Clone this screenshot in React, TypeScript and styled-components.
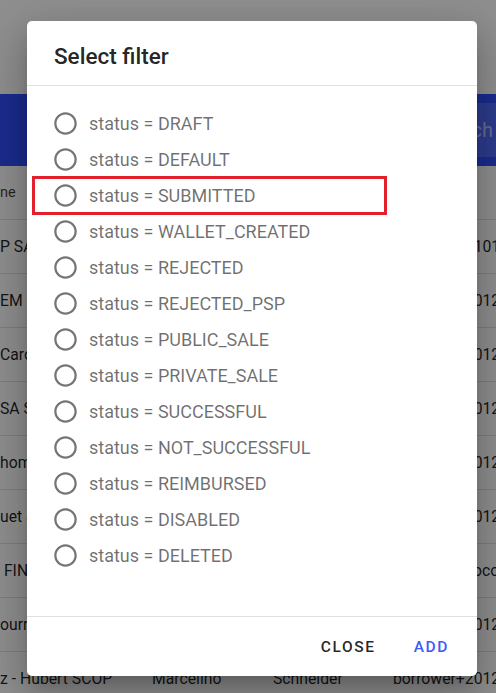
import { createGlobalStyle } from "styled-components";
import styled from "styled-components";

const GlobalStyle = createGlobalStyle`
  html, body {
    margin: 0;
    padding: 0;
    background: #ffffff;
  }
  body {
    font-family: Roboto, "Liberation Sans", Arial, sans-serif;
  }
`;

const Page = styled.div`
  position: relative;
  width: 496px;
  height: 693px;
  overflow: hidden;
  background: #ffffff;
`;

const TopSpace = styled.div`
  height: 94px;
`;

const Toolbar = styled.div`
  height: 72px;
  background: #304ffe;
  display: flex;
  align-items: center;
  justify-content: flex-end;
`;

const SearchBox = styled.div`
  width: 200px;
  height: 54px;
  box-sizing: border-box;
  padding-right: 3px;
  background: rgba(255, 255, 255, 0.16);
  border-radius: 4px 0 0 4px;
  display: flex;
  align-items: center;
  justify-content: flex-end;
  color: rgba(255, 255, 255, 0.6);
  font-size: 20px;
`;

const Table = styled.div`
  display: flex;
  flex-direction: column;
`;

const Row = styled.div<{ $header?: boolean }>`
  height: 54px;
  box-sizing: border-box;
  display: grid;
  grid-template-columns: 152px 121px 120px 1fr;
  align-items: center;
  border-bottom: 1px solid #e0e0e0;
  font-size: ${({ $header }) => ($header ? "14.5px" : "15.75px")};
  color: ${({ $header }) =>
    $header ? "rgba(0, 0, 0, 0.75)" : "rgba(0, 0, 0, 0.87)"};
  white-space: nowrap;
`;

const Cell = styled.div`
  overflow: hidden;
`;

const Backdrop = styled.div`
  position: absolute;
  inset: 0;
  background: rgba(0, 0, 0, 0.44);
  box-sizing: border-box;
  padding: 21px 19px 17px 27px;
  display: flex;
`;

const Dialog = styled.div`
  width: 450px;
  height: 655px;
  background: #ffffff;
  border-radius: 5px;
  display: flex;
  flex-direction: column;
  box-shadow: 0 11px 15px -7px rgba(0, 0, 0, 0.2),
    0 24px 38px 3px rgba(0, 0, 0, 0.14), 0 9px 46px 8px rgba(0, 0, 0, 0.12);
`;

const Title = styled.h2`
  margin: 0;
  height: 65px;
  box-sizing: border-box;
  padding: 17px 27px 0;
  font-size: 22.5px;
  line-height: 36px;
  font-weight: 500;
  color: rgba(0, 0, 0, 0.87);
  border-bottom: 1px solid #e0e0e0;
`;

const Content = styled.div`
  flex: 1;
  padding: 19px 27px 0;
  border-bottom: 1px solid #e0e0e0;
  display: flex;
  flex-direction: column;
`;

const Option = styled.label`
  position: relative;
  height: 36px;
  display: flex;
  align-items: center;
  gap: 10px;
  font-size: 18px;
  color: rgba(0, 0, 0, 0.57);
  cursor: pointer;
`;

const RadioIcon = styled.svg`
  width: 27px;
  height: 27px;
  margin-left: -2px;
  flex-shrink: 0;
  color: rgba(0, 0, 0, 0.54);
`;

const Highlight = styled.span`
  position: absolute;
  left: -22px;
  top: -1px;
  width: 355px;
  height: 39px;
  box-sizing: border-box;
  border: 3px solid #e3202b;
  pointer-events: none;
`;

const Actions = styled.div`
  height: 59px;
  display: flex;
  align-items: center;
  justify-content: flex-end;
  gap: 18px;
  padding-right: 18px;
`;

const TextButton = styled.button<{ $primary?: boolean }>`
  border: none;
  background: none;
  padding: 8px 10px;
  font-family: inherit;
  font-size: 15.5px;
  font-weight: 500;
  letter-spacing: 1.6px;
  text-transform: uppercase;
  color: ${({ $primary }) => ($primary ? "#3d5afe" : "rgba(0, 0, 0, 0.87)")};
  cursor: pointer;
`;

const statuses = [
  "DRAFT",
  "DEFAULT",
  "SUBMITTED",
  "WALLET_CREATED",
  "REJECTED",
  "REJECTED_PSP",
  "PUBLIC_SALE",
  "PRIVATE_SALE",
  "SUCCESSFUL",
  "NOT_SUCCESSFUL",
  "REIMBURSED",
  "DISABLED",
  "DELETED",
];

const rows = [
  ["P SAS", "Julien", "Martin", "borrower+0101@mail.fr"],
  ["EM SAS", "Claire", "Durand", "borrower+2012@mail.fr"],
  ["Caron", "Louis", "Caron", "borrower+2012@mail.fr"],
  ["SA SCOP", "Emma", "Petit", "borrower+2012@mail.fr"],
  ["homas", "Hugo", "Thomas", "borrower+2012@mail.fr"],
  ["uet and co", "Léa", "Jouet", "borrower+2012@mail.fr"],
  ["\u00a0FINANCE", "Paul", "Leroy", "borrower+coco@mail.fr"],
  ["ourrier", "Anna", "Fourrier", "borrower+2012@mail.fr"],
  ["z - Hubert SCOP", "Marcelino", "Schneider", "borrower+2012@mail.fr"],
];

const Radio = () => (
  <RadioIcon viewBox="0 0 24 24" aria-hidden="true">
    <path
      fill="currentColor"
      d="M12 2C6.48 2 2 6.48 2 12s4.48 10 10 10 10-4.48 10-10S17.52 2 12 2zm0 18c-4.42 0-8-3.58-8-8s3.58-8 8-8 8 3.58 8 8-3.58 8-8 8z"
    />
  </RadioIcon>
);

export default function App() {
  return (
    <Page>
      <GlobalStyle />
      <TopSpace />
      <Toolbar>
        <SearchBox>Search</SearchBox>
      </Toolbar>
      <Table>
        <Row $header>
          <Cell>ne</Cell>
          <Cell>First name</Cell>
          <Cell>Last name</Cell>
          <Cell>Email</Cell>
        </Row>
        {rows.map((cells, i) => (
          <Row key={i}>
            {cells.map((c, j) => (
              <Cell key={j}>{c}</Cell>
            ))}
          </Row>
        ))}
      </Table>
      <Backdrop>
        <Dialog role="dialog">
          <Title>Select filter</Title>
          <Content>
            {statuses.map((s) => (
              <Option key={s}>
                <Radio />
                status = {s}
                {s === "SUBMITTED" && <Highlight />}
              </Option>
            ))}
          </Content>
          <Actions>
            <TextButton>Close</TextButton>
            <TextButton $primary>Add</TextButton>
          </Actions>
        </Dialog>
      </Backdrop>
    </Page>
  );
}
